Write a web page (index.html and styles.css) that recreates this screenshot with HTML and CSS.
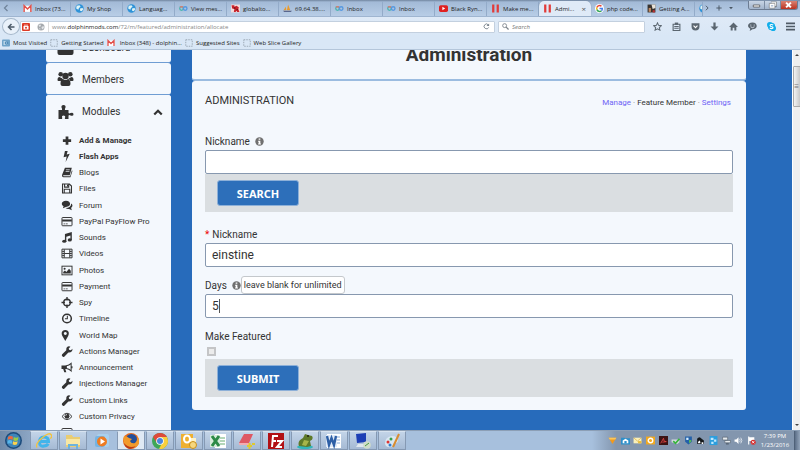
FILE: index.html
```
<!DOCTYPE html>
<html lang="en">
<head>
    <meta charset="utf-8">
    <title>Administration</title>
    <link rel="stylesheet" href="styles.css">
</head>
<body>
    <!-- icon sprite -->
    <svg class="sprite" aria-hidden="true">
        <symbol id="gmail" viewBox="0 0 16 16"><path fill="#fff" d="M1 3h14v11H1z"/><path fill="none" stroke="#e2504a" stroke-width="2.6" d="M2 14V3l6 6 6-6v11"/></symbol>
        <symbol id="globe" viewBox="0 0 16 16"><circle cx="8" cy="8" r="7.5" fill="#2f93d8"/><path fill="#dff3f5" d="M3 3l5-1 2 3-3 2-1 3-4-2zM9 8l4-1 2 2-3 4-3-1z"/></symbol>
        <symbol id="loop" viewBox="0 0 16 16"><g fill="none" stroke-width="2.4"><circle cx="4.5" cy="8" r="3.2" stroke="#4bb5b0"/><circle cx="11" cy="8" r="3.2" stroke="#5598e0"/><path stroke="#e2776c" d="M2 6a3.200 3.200 0 0 1 5 0"/></g></symbol>
        <symbol id="redsite" viewBox="0 0 16 16"><path fill="#f4dcdc" d="M0 1h16v14H0z"/><path fill="#c9222b" d="M1 2h5v3l4-2 4 3-1 3 2 5h-4l-1-2-2 2H5l1-5-4-1z"/><path fill="#511" d="M5 6h3v2H5zM10 9h2v2h-2z"/></symbol>
        <symbol id="sail" viewBox="0 0 16 16"><path fill="#e99a2c" d="M1 11l4-6 1 6zM7 11l2-10 4 10z"/><path fill="#59678e" d="M0 12h16l-2 2H2z"/></symbol>
        <symbol id="youtube" viewBox="0 0 16 16"><rect y="2" width="16" height="12" rx="3" fill="#e02020"/><path fill="#fff" d="M6 5l5 3-5 3z"/></symbol>
        <symbol id="bars" viewBox="0 0 16 16"><path fill="#e23b39" d="M2 1h4v14H2zM10 1h4v14h-4z"/></symbol>
        <symbol id="google" viewBox="0 0 16 16"><circle cx="8" cy="8" r="8" fill="#fff"/><g fill="none" stroke-width="2.6"><path stroke="#e74435" d="M3.500 6a5 5 0 0 1 8-2"/><path stroke="#f5b912" d="M3.500 10a5 5 0 0 1 0-4"/><path stroke="#35a455" d="M3.500 10a5 5 0 0 0 8 2"/><path stroke="#4580ec" d="M8 8h5q0 3-1.500 4"/></g></symbol>
        <symbol id="photo" viewBox="0 0 16 16"><path fill="#39332f" d="M1 1h14v14H1z"/><path fill="#e8e2d8" d="M8 1h7v6l-5 2z"/><path fill="#c18a62" d="M3 7h4v7H3z"/><path fill="#b33" d="M10 11h4v4h-4z"/></symbol>
        <symbol id="back" viewBox="0 0 16 16"><path fill="none" stroke="#4c5a68" stroke-width="3" d="M15 8H3M9 2L3 8l6 6"/></symbol>
        <symbol id="block" viewBox="0 0 16 16"><rect width="16" height="16" rx="2" fill="#dd3a26"/><path fill="#fff" d="M3 6h10v7H3zM5 3h2v3H5zM9 3h2v3H9z"/><circle cx="8" cy="9.500" r="2" fill="#dd3a26"/></symbol>
        <symbol id="world" viewBox="0 0 16 16"><circle cx="8" cy="8" r="7" fill="#a5a9ad"/><path fill="#e2e5e8" d="M3 4l4-1 1 3-3 2zM9 8l4-2 1 4-4 3zM4 10l3 1-1 3z"/></symbol>
        <symbol id="reload" viewBox="0 0 16 16"><path fill="none" stroke="#76808a" stroke-width="2" d="M13 10a5.500 5.500 0 1 1-1-6"/><path fill="#76808a" d="M14 1v6H8z"/></symbol>
        <symbol id="lens" viewBox="0 0 16 16"><g fill="none" stroke="#7b838b" stroke-width="2"><circle cx="6" cy="6" r="4.500"/><path stroke-width="3" d="M9.500 9.500L15 15"/></g></symbol>
        <symbol id="star" viewBox="0 0 16 16"><path fill="none" stroke="#5b6670" stroke-width="1.800" d="M8 1.500l2 4.500 5 .5-3.700 3.300 1 4.700L8 12l-4.300 2.500 1-4.700L1 6.500 6 6z"/></symbol>
        <symbol id="clip" viewBox="0 0 16 16"><path fill="none" stroke="#5b6670" stroke-width="2" d="M2 4h12v11H2zM4 8h8M4 11h8"/><path fill="#5b6670" d="M5 1h6v4H5z"/></symbol>
        <symbol id="pocket" viewBox="0 0 16 16"><path fill="#5b6670" d="M1 2h14v6a7 7 0 0 1-14 0z"/><path fill="none" stroke="#fff" stroke-width="2" d="M4.500 6.500L8 10l3.500-3.500"/></symbol>
        <symbol id="down" viewBox="0 0 16 16"><path fill="#5b6670" d="M6 1h4v7h5l-7 7-7-7h5z"/></symbol>
        <symbol id="home" viewBox="0 0 16 16"><path fill="#5b6670" d="M8 1l8 8h-3v6H9.500v-5h-3v5H3V9H0z"/></symbol>
        <symbol id="smile" viewBox="0 0 16 16"><path fill="#5b6670" d="M8 1c10 0 10 12 0 12l-5 3 1-4C-3 8 0 1 8 1z"/><path fill="none" stroke="#dfe9f5" stroke-width="1.500" d="M4.500 8.500q3.500 3 7 0M5 4.500v2M11 4.500v2"/></symbol>
        <symbol id="skype" viewBox="0 0 16 16"><circle cx="5" cy="5" r="5" fill="#12aeea"/><circle cx="11" cy="11" r="5" fill="#12aeea"/><circle cx="8" cy="8" r="6.500" fill="#12aeea"/><path fill="none" stroke="#fff" stroke-width="1.800" d="M11 5.500C9 3.500 5 4 5.500 6.500S11 8 10.800 10 7 12.500 5 10.500"/></symbol>
        <symbol id="menu" viewBox="0 0 16 16"><path fill="#505b66" d="M0 1h16v3H0zM0 6.500h16v3H0zM0 12h16v3H0z"/></symbol>
        <symbol id="dashed" viewBox="0 0 16 16"><rect x="1.500" y="1.500" width="13" height="13" fill="none" stroke="#8b97a3" stroke-width="1.500" stroke-dasharray="3 2"/></symbol>
        <symbol id="visited" viewBox="0 0 16 16"><rect y="1" width="16" height="14" rx="2" fill="#6ea3c9"/><path fill="#bcd7e9" d="M3 4h6l2 2v6H3z"/><circle cx="9" cy="8" r="3.500" fill="#4b86b5"/><circle cx="9" cy="8" r="1.500" fill="#a9cce4"/></symbol>

        <symbol id="tach" viewBox="0 0 16 16"><path fill="#333" d="M0 6h3v4h10V6h3v7q0 2-2 2H2q-2 0-2-2z"/></symbol>
        <symbol id="users" viewBox="0 0 16 16"><g fill="#333"><circle cx="3.200" cy="3.300" r="2.300"/><circle cx="12.800" cy="3.300" r="2.300"/><circle cx="8" cy="5" r="3.200"/><path d="M0 9q0-3 2-3l3 1.500L4.500 9 3 10H1q-1 0-1-1zM16 9q0-3-2-3l-3 1.500.5 1.500 1.500 1h2q1 0 1-1zM3 13q0-5 2.500-5Q8 10 10.500 8 13 8 13 13q0 2-2 2H5q-2 0-2-2z"/></g></symbol>
        <symbol id="puzzle" viewBox="0 0 16 16"><path fill="#333" d="M1 6h3.500Q5 5 4 3.500 3.500 1 6 1t2 2.500Q7 5 7.500 6H11v3q1 .8 2 0 3-1 3 1.200t-3 1.300q-1-.8-2 0V15H7.500q-.5-1 .3-2 .2-1.500-1.800-1.500T4.500 13q.5 1 0 2H1z"/></symbol>
        <symbol id="chevron" viewBox="0 0 16 16"><path fill="none" stroke="#333" stroke-width="3.500" d="M2 12l6-6 6 6"/></symbol>
        <symbol id="plus" viewBox="0 0 16 16"><path fill="#333" d="M6 2h4v4h4v4h-4v4H6v-4H2V6h4z"/></symbol>
        <symbol id="bolt" viewBox="0 0 16 16"><path fill="#333" d="M5 0h4L7.500 5l4.500-1L6 16l1.500-8L3 9z"/></symbol>
        <symbol id="book" viewBox="0 0 16 16"><path fill="#333" d="M5 1h10l-3 11H3q-1.500 1 0 1.500h9.500L15 5l1 .5L13 15H3q-3-.5-2-4z"/><path stroke="#f4f8fd" d="M6.500 4h5.500M6 6.500h5.500"/></symbol>
        <symbol id="save" viewBox="0 0 16 16"><path fill="none" stroke="#333" stroke-width="1.600" d="M1.500 1.500h10l3 3v10h-13zM4 14v-5h8v5M4.500 2v4h6V2"/><path fill="#333" d="M8 2h2v3H8z"/></symbol>
        <symbol id="comments" viewBox="0 0 16 16"><path fill="#333" d="M6.500 1c8 0 8 9 0 9L2 12l1-3C-2 6 1 1 6.500 1z"/><path fill="#333" d="M14 5c3 2 2 5 0 6.500L15 15l-4-2q-3 .5-5-1.500 8 0 8-6.500z"/></symbol>
        <symbol id="card" viewBox="0 0 16 16"><rect x=".7" y="2.200" width="14.600" height="12" rx="1" fill="none" stroke="#333" stroke-width="1.400"/><path fill="#333" d="M1 5h14v3H1zM3 11h2v1H3zM6 11h3v1H6z"/></symbol>
        <symbol id="music" viewBox="0 0 16 16"><path fill="#333" d="M5 3l10-3v11.500H13V5L7 7v7H5z"/><ellipse cx="4" cy="13.500" rx="3" ry="2.300" fill="#333"/><ellipse cx="12" cy="11.500" rx="3" ry="2.300" fill="#333"/></symbol>
        <symbol id="film" viewBox="0 0 16 16"><path fill="none" stroke="#333" stroke-width="1.400" d="M.7 1.700h14.600v12.600H.7zM4 2v12M12 2v12M4 8h8M1 5h3M1 8h3M1 11h3M12 5h3M12 8h3M12 11h3"/></symbol>
        <symbol id="image" viewBox="0 0 16 16"><rect x=".7" y="1.700" width="14.600" height="12.600" fill="none" stroke="#333" stroke-width="1.400"/><circle cx="4.500" cy="5.500" r="1.500" fill="#333"/><path fill="#333" d="M2.500 12.500V10L5 8l2 2 4-4.500 2.500 3v4z"/></symbol>
        <symbol id="cross" viewBox="0 0 16 16"><circle cx="8" cy="8" r="4.800" fill="none" stroke="#333" stroke-width="2"/><path fill="#333" d="M7 0h2v5H7zM7 11h2v5H7zM0 7h5v2H0zM11 7h5v2h-5z"/></symbol>
        <symbol id="clock" viewBox="0 0 16 16"><g fill="none" stroke="#333"><circle cx="8" cy="8" r="6.300" stroke-width="2.200"/><path stroke-width="1.500" d="M8.500 4v4.500H5"/></g></symbol>
        <symbol id="pin" viewBox="0 0 16 16"><path fill="#333" fill-rule="evenodd" d="M5.500 0c6 0 6 6 4 9l-4 7-4-7c-2-3-2-9 4-9zm0 3a2.200 2.200 0 1 0 .1 0z"/></symbol>
        <symbol id="wrench" viewBox="0 0 16 16"><path fill="#333" d="M1 12l6-6Q6.500 1 11 .5l2 .5-2.500 2.500.5 2 2.500.5L16 4q0 6-6 5.500L4 15.500q-1.500 1-2.800-.5T1 12z"/></symbol>
        <symbol id="horn" viewBox="0 0 16 16"><path fill="#333" d="M0 5h7v5H5.500L7 15H4L2.500 10H0z"/><path fill="none" stroke="#333" stroke-width="1.500" d="M7 5.500q4-.5 7-3.500v11q-3-3-7-3.500z"/><path fill="#333" d="M14 6h2v3h-2z"/></symbol>
        <symbol id="eye" viewBox="0 0 16 16"><path fill="none" stroke="#333" stroke-width="1.400" d="M.7 8q7.300-9.500 14.600 0Q8 17 .7 8z"/><circle cx="8" cy="7.500" r="3.600" fill="#333"/><path fill="none" stroke="#f4f8fd" d="M6 7q0-2 2-2"/></symbol>
        <symbol id="info" viewBox="0 0 16 16"><circle cx="8" cy="8" r="7.500" fill="#707070"/><path fill="#fff" d="M6.500 2.500h3v2.500h-3zM5.500 6.500h4v5h1v1.800h-5v-1.800h1v-3.200h-1z"/></symbol>

        <symbol id="start" viewBox="0 0 16 16"><circle cx="8" cy="8" r="8" fill="#1d4c7d"/><circle cx="8" cy="8" r="6.500" fill="#3f85b8"/><path fill="#f0683a" d="M3 4.500q2.500-1.500 4.500 0L7 7.500q-2-1.500-4.300-.2z"/><path fill="#9acb43" d="M8.300 4.800q2 1.200 4.400 0l-.6 3q-2.200 1.200-4.300 0z"/><path fill="#55b6ec" d="M2.600 8.200q2-1.300 4.200 0l-.5 3q-2-1.300-4-.2z"/><path fill="#fbd24b" d="M7.600 8.600q2 1.200 4.300 0l-.6 3q-2 1.200-4.200 0z"/></symbol>
        <symbol id="ie" viewBox="0 0 16 16"><path fill="none" stroke="#42b4ea" stroke-width="3" d="M3.500 8.500h9Q12.500 4 8 4T3.500 9 8 13q3 0 4.200-2.200"/><path fill="none" stroke="#f3c33c" stroke-width="1.300" d="M1 14.500Q-1 11 6 5t9-3.500-1 4"/></symbol>
        <symbol id="folder" viewBox="0 0 16 16"><path fill="#e9cd73" d="M1 2h6l1 2h7v10H1z"/><path fill="#f8e7a4" d="M1 6h14v6H1z"/><path fill="#6db3dc" d="M3 11h10v5h-2v-3H5v3H3z"/></symbol>
        <symbol id="player" viewBox="0 0 16 16"><rect x="3" y="1" width="12" height="13" rx="2" fill="#a8d0ee"/><rect x="1" y="3" width="10" height="11" rx="2" fill="#75b4e3"/><circle cx="8" cy="8.500" r="5" fill="#ee7b22"/><path fill="#fff" d="M6.500 5.500l4.500 3-4.500 3z"/></symbol>
        <symbol id="firefox" viewBox="0 0 16 16"><circle cx="8" cy="8" r="8" fill="#e66a1c"/><circle cx="8.500" cy="6.500" r="5.500" fill="#234f9b"/><path fill="#f29a2b" d="M1 3q3 0 5 2l3 1-2 2q1 3 5 2 3-2 2-7 5 7-1 11-9 4-12-4-1-4 0-7z"/><path fill="#bb3a17" d="M1 10q5 6 12 3-3 3-6 3-5-1-6-6z"/></symbol>
        <symbol id="chrome" viewBox="0 0 16 16"><circle cx="8" cy="8" r="8" fill="#3fa757"/><path fill="#de4a3c" d="M1 4q2.500-4 7-4t7 4H8L5 10z"/><path fill="#f9cf3e" d="M15 4q3 7-3 11-2 1.500-5 1l4-8-3-4z"/><circle cx="8" cy="8" r="3.800" fill="#fff"/><circle cx="8" cy="8" r="3" fill="#4a86de"/></symbol>
        <symbol id="outlook" viewBox="0 0 16 16"><path fill="#eeb030" d="M0 1h12v14H0z"/><path fill="#fff3c6" d="M8 5h7v4H8z"/><ellipse cx="6" cy="6" rx="3" ry="3.500" fill="none" stroke="#fff" stroke-width="2"/><circle cx="12" cy="12" r="3.500" fill="#f6d77f" stroke="#c88f19"/></symbol>
        <symbol id="excel" viewBox="0 0 16 16"><path fill="#fff" d="M5 1h11v14H5z"/><path stroke="#68ad72" d="M10 5h5M10 8h5M10 11h5"/><path fill="#d8ecdc" d="M0 2h10v12H0z"/><path stroke="#2d8a47" stroke-width="3" d="M2 3l7 10M9 3L2 13"/></symbol>
        <symbol id="card3" viewBox="0 0 16 16"><path fill="#de5863" d="M5 1h9l-4 9H0z"/><path fill="#f4aab0" d="M0 10h10v2H0z"/><path fill="none" stroke="#dfc92e" stroke-width="2" d="M8 13h5M10.500 10v6M13 11h3"/></symbol>
        <symbol id="filezilla" viewBox="0 0 16 16"><path fill="#b11116" d="M0 0h16v16H0z"/><path fill="none" stroke="#fff" stroke-width="2" d="M4 14l1-11h5M4 8h4M9 8h5l-5 6h5"/></symbol>
        <symbol id="frog" viewBox="0 0 16 16"><ellipse cx="8" cy="14" rx="8" ry="2" fill="#31b6bb"/><path fill="#5e7a2a" d="M2 13Q0 8 6 5l2-4 3 1 4 1q2 3-2 5l1 5-4 1z"/><path fill="#a6b54a" d="M7 7l5 1-3 5-4-1z"/><circle cx="11" cy="3" r="1" fill="#221"/></symbol>
        <symbol id="word" viewBox="0 0 16 16"><path fill="#fff" d="M1 1h14v14H1z"/><path stroke="#86a9d8" d="M11 4h3M11 7h3M11 10h3"/><path fill="#e1ebf8" d="M0 2h11v12H0z"/><path fill="none" stroke="#2d5fa6" stroke-width="2.400" d="M1 3l2 9 2.500-7L8 12l2-9"/></symbol>
        <symbol id="remote" viewBox="0 0 16 16"><path fill="#1d3fb5" d="M1 1l10-1v9l-9 1z"/><path fill="#dfe7ef" d="M3 11h7l1 3H1z"/><circle cx="12" cy="12" r="3.800" fill="#cfdcc9"/><path stroke="#4a9a3f" d="M10 13l4-3"/></symbol>
        <symbol id="paint" viewBox="0 0 16 16"><path fill="#d9e7f2" d="M1 10Q1 4 8 3q6 0 6 5-1 3-4 2-1 5-6 4-3-1-3-4z"/><circle cx="4" cy="9" r="1.500" fill="#d33"/><circle cx="7" cy="6" r="1.500" fill="#3a9f4b"/><circle cx="6" cy="12" r="1.500" fill="#2f7cd1"/><path stroke="#d98c30" stroke-width="2" d="M15 1L9 14"/></symbol>

        <symbol id="t-down" viewBox="0 0 16 16"><path fill="#f39a1b" d="M1 3h14L8 14z"/><path fill="#fbc65a" d="M1 3h14l-2 3H3z"/></symbol>
        <symbol id="t-box" viewBox="0 0 16 16"><path fill="#2d8fc9" d="M0 3h6l1 1h9v11H0z"/><path fill="#fff" d="M3 8l5-3 5 3v5H3z"/><path fill="#2d8fc9" d="M6 9h4v4H6z"/></symbol>
        <symbol id="t-mail" viewBox="0 0 16 16"><path fill="#fbf0b9" d="M1 3h14v10H1z"/><path fill="none" stroke="#d0a12b" d="M1 3l7 6 7-6"/><path fill="#e9bd3e" d="M9 9h6v4H9z"/></symbol>
        <symbol id="t-out" viewBox="0 0 16 16"><path fill="#f0a91f" d="M0 1h16v14H0z"/><circle cx="8" cy="8" r="4" fill="none" stroke="#fff" stroke-width="2.500"/></symbol>
        <symbol id="t-pdf" viewBox="0 0 16 16"><path fill="#3c1414" d="M0 0h16v16H0z"/><path fill="none" stroke="#e24545" stroke-width="1.500" d="M3 13l5-9 1 5 4 1-7 1"/></symbol>
        <symbol id="t-disk" viewBox="0 0 16 16"><path fill="#d6dbdf" d="M1 6h14v5l-4 3-10-3z"/><path fill="none" stroke="#37b43d" stroke-width="3" d="M4 9l4 4 7-8"/></symbol>
        <symbol id="t-net" viewBox="0 0 16 16"><path fill="#2461a9" d="M2 1h12v9l-6 5-6-5z"/><path fill="#d9efff" d="M4 3h4v4H4z"/><path fill="#58b85a" d="M9 7h4v3l-4 3z"/></symbol>
        <symbol id="t-dark" viewBox="0 0 16 16"><path fill="#16191c" d="M2 14V5q4-6 8 0l4 3v6z"/><path fill="#fff" d="M3 13q1-5 4-5l1 5zM10 11h3v3h-3z"/></symbol>
        <symbol id="t-win" viewBox="0 0 16 16"><path fill="#2c9ede" d="M1 0h14v16H1z"/><path fill="#bfe9ff" d="M3 3h5v4H3zM9 6h4v4H9zM4 10h4v4H4z"/></symbol>
        <symbol id="t-usb" viewBox="0 0 16 16"><path fill="#e5eaee" stroke="#4c5966" d="M1 2h9v5H1zM5 8h10v4H5z"/><path fill="#4c5966" d="M7 13h5v2H7z"/></symbol>
        <symbol id="t-sound" viewBox="0 0 16 16"><path fill="#fff" d="M1 6h3l4-4v12l-4-4H1z"/><path fill="none" stroke="#e4eaf0" stroke-width="1.500" d="M10 5q2 3 0 6M12 3q4 5 0 10"/></symbol>
        <symbol id="t-flag" viewBox="0 0 16 16"><path fill="#fff" d="M2 1h2v14H2zM4 2h9v7H4z"/><circle cx="11" cy="11" r="4.500" fill="#d62c2c"/><path stroke="#fff" stroke-width="1.500" d="M9 9l4 4M13 9l-4 4"/></symbol>
    </svg>

    <!-- tabs -->
    <div class="tab-bar">
        <svg class="tab-scroll" viewBox="0 0 16 16"><path fill="none" stroke="#71849b" stroke-width="2.500" d="M11 2L5 8l6 6"/></svg>
        <div class="tabs">
            <div class="tab"><svg><use href="#gmail"/></svg>Inbox (73...</div>
            <div class="tab"><svg><use href="#globe"/></svg>My Shop</div>
            <div class="tab"><svg><use href="#globe"/></svg>Languag...</div>
            <div class="tab"><svg><use href="#loop"/></svg>View mes...</div>
            <div class="tab"><svg><use href="#redsite"/></svg>globalto...</div>
            <div class="tab"><svg><use href="#sail"/></svg>69.64.38....</div>
            <div class="tab"><svg><use href="#loop"/></svg>Inbox</div>
            <div class="tab"><svg><use href="#loop"/></svg>Inbox</div>
            <div class="tab"><svg><use href="#youtube"/></svg>Black Ryn...</div>
            <div class="tab"><svg><use href="#bars"/></svg>Make me...</div>
            <div class="tab active"><svg><use href="#bars"/></svg>Admi...<span class="tab-close">×</span></div>
            <div class="tab"><svg><use href="#google"/></svg>php code...</div>
            <div class="tab"><svg><use href="#photo"/></svg>Getting A...</div>
            <div class="tab cut"><svg><use href="#globe"/></svg></div>
        </div>
        <div class="tab-tools">
            <svg viewBox="0 0 16 16"><path fill="none" stroke="#4a5663" stroke-width="2.500" d="M5 2l6 6-6 6"/></svg>
            <svg viewBox="0 0 16 16"><path stroke="#4a5663" stroke-width="2.500" d="M8 1v14M1 8h14"/></svg>
            <svg viewBox="0 0 16 16"><path fill="#4a5663" d="M3 5h10l-5 6z"/></svg>
        </div>
        <div class="window-buttons">
            <button class="win-btn" aria-label="Minimize"><svg viewBox="0 0 16 10"><path fill="#fff" stroke="#555" d="M4 5h8v2.500H4z"/></svg></button>
            <button class="win-btn" aria-label="Restore"><svg viewBox="0 0 16 10"><path fill="none" stroke="#fff" stroke-width="2" d="M5 4h5v4H5zM7 2h5v4"/><path fill="none" stroke="#555" stroke-width=".6" d="M4 3h7v6H4zM6 1h7v6h-2"/></svg></button>
            <button class="win-btn close" aria-label="Close"><svg viewBox="0 0 16 10"><path stroke="#fff" stroke-width="2.500" d="M5 2l6 6M11 2L5 8"/></svg></button>
        </div>
    </div>

    <!-- address bar -->
    <div class="nav-bar">
        <button class="back-btn" aria-label="Back"><svg><use href="#back"/></svg></button>
        <div class="url-box">
            <svg><use href="#block"/></svg>
            <svg class="site"><use href="#world"/></svg>
            <div class="url" role="textbox" aria-label="Address">www.<b>dolphinmods.com</b>/72/m/featured/administration/allocate</div>
            <svg class="reload"><use href="#reload"/></svg>
        </div>
        <label class="search-box"><svg><use href="#lens"/></svg><input type="text" placeholder="Search" aria-label="Search"></label>
        <div class="nav-icons">
            <svg><use href="#star"/></svg>
            <svg><use href="#clip"/></svg>
            <svg><use href="#pocket"/></svg>
            <svg><use href="#down"/></svg>
            <svg><use href="#home"/></svg>
            <svg><use href="#smile"/></svg>
            <svg><use href="#skype"/></svg>
            <svg><use href="#menu"/></svg>
        </div>
    </div>

    <!-- bookmarks -->
    <div class="bookmarks">
        <a href="#"><svg><use href="#visited"/></svg>Most Visited</a>
        <a href="#"><svg><use href="#dashed"/></svg>Getting Started</a>
        <a class="mail" href="#"><svg><use href="#gmail"/></svg>Inbox (348) - dolphin...</a>
        <a href="#"><svg><use href="#dashed"/></svg>Suggested Sites</a>
        <a href="#"><svg><use href="#dashed"/></svg>Web Slice Gallery</a>
    </div>

    <!-- page -->
    <div class="viewport">
        <div class="page">
            <aside class="sidebar">
                <a class="menu-item first" href="#"><svg><use href="#tach"/></svg>Dashboard</a>
                <a class="menu-item" href="#"><svg><use href="#users"/></svg>Members</a>
                <div class="menu-group">
                    <a class="menu-item" href="#"><svg><use href="#puzzle"/></svg>Modules<svg class="toggle"><use href="#chevron"/></svg></a>
                    <ul class="submenu">
                        <li><a class="strong" href="#"><svg><use href="#plus"/></svg>Add &amp; Manage</a></li>
                        <li><a class="strong" href="#"><svg><use href="#bolt"/></svg>Flash Apps</a></li>
                        <li><a href="#"><svg><use href="#book"/></svg>Blogs</a></li>
                        <li><a href="#"><svg><use href="#save"/></svg>Files</a></li>
                        <li><a href="#"><svg><use href="#comments"/></svg>Forum</a></li>
                        <li><a href="#"><svg><use href="#card"/></svg>PayPal PayFlow Pro</a></li>
                        <li><a href="#"><svg><use href="#music"/></svg>Sounds</a></li>
                        <li><a href="#"><svg><use href="#film"/></svg>Videos</a></li>
                        <li><a href="#"><svg><use href="#image"/></svg>Photos</a></li>
                        <li><a href="#"><svg><use href="#card"/></svg>Payment</a></li>
                        <li><a href="#"><svg><use href="#cross"/></svg>Spy</a></li>
                        <li><a href="#"><svg><use href="#clock"/></svg>Timeline</a></li>
                        <li><a href="#"><svg><use href="#pin"/></svg>World Map</a></li>
                        <li><a href="#"><svg><use href="#wrench"/></svg>Actions Manager</a></li>
                        <li><a href="#"><svg><use href="#horn"/></svg>Announcement</a></li>
                        <li><a href="#"><svg><use href="#wrench"/></svg>Injections Manager</a></li>
                        <li><a href="#"><svg><use href="#wrench"/></svg>Custom Links</a></li>
                        <li><a href="#"><svg><use href="#eye"/></svg>Custom Privacy</a></li>
                        <li><a href="#" aria-label="More"><svg><use href="#card"/></svg></a></li>
                    </ul>
                </div>
            </aside>

            <main class="main">
                <div class="title-box"><h1>Administration</h1></div>
                <div class="panel">
                    <div class="panel-head">
                        <h2>ADMINISTRATION</h2>
                        <div class="panel-links">
                            <a href="#">Manage</a><i>·</i><span>Feature Member</span><i>·</i><a href="#">Settings</a>
                        </div>
                    </div>
                    <form class="search-form">
                        <div class="label-row"><label for="find-name">Nickname</label><svg><use href="#info"/></svg></div>
                        <input class="field" type="text" id="find-name">
                        <div class="actions"><button type="button" class="btn">SEARCH</button></div>
                    </form>
                    <form>
                        <div class="label-row"><span class="required">*</span><label for="nickname">Nickname</label></div>
                        <input class="field" type="text" id="nickname" value="einstine">
                        <div class="label-row spaced">
                            <label for="days">Days</label>
                            <svg><use href="#info"/></svg>
                            <span class="tooltip">leave blank for unlimited</span>
                        </div>
                        <div class="field-wrap"><input class="field" type="text" id="days" value="5"></div>
                        <div class="label-row spaced"><label for="featured">Make Featured</label></div>
                        <div class="check-row"><input type="checkbox" id="featured"></div>
                        <div class="actions"><button type="button" class="btn">SUBMIT</button></div>
                    </form>
                </div>
            </main>
        </div>
        <div class="scrollbar"><span class="arrow up"></span><div class="thumb">≡</div><span class="arrow"></span></div>
    </div>

    <!-- taskbar -->
    <div class="taskbar">
        <button class="start" aria-label="Start"><svg><use href="#start"/></svg></button>
        <div class="apps">
            <button class="app" aria-label="Internet Explorer"><svg><use href="#ie"/></svg></button>
            <button class="app" aria-label="Explorer"><svg><use href="#folder"/></svg></button>
            <button class="app idle" aria-label="Media Player"><svg><use href="#player"/></svg></button>
            <button class="app current" aria-label="Firefox"><svg><use href="#firefox"/></svg></button>
            <button class="app" aria-label="Chrome"><svg><use href="#chrome"/></svg></button>
            <button class="app" aria-label="Outlook"><svg><use href="#outlook"/></svg></button>
            <button class="app" aria-label="Excel"><svg><use href="#excel"/></svg></button>
            <button class="app" aria-label="Cards"><svg><use href="#card3"/></svg></button>
            <button class="app" aria-label="FileZilla"><svg><use href="#filezilla"/></svg></button>
            <button class="app" aria-label="Frog"><svg><use href="#frog"/></svg></button>
            <button class="app" aria-label="Word"><svg><use href="#word"/></svg></button>
            <button class="app" aria-label="Remote Desktop"><svg><use href="#remote"/></svg></button>
            <button class="app" aria-label="Paint"><svg><use href="#paint"/></svg></button>
        </div>
        <div class="tray">
            <svg><use href="#t-down"/></svg>
            <svg><use href="#t-box"/></svg>
            <svg><use href="#t-mail"/></svg>
            <svg><use href="#t-out"/></svg>
            <svg><use href="#t-pdf"/></svg>
            <svg><use href="#t-disk"/></svg>
            <svg><use href="#t-net"/></svg>
            <svg><use href="#t-dark"/></svg>
            <svg><use href="#t-win"/></svg>
            <svg><use href="#t-usb"/></svg>
            <svg><use href="#t-sound"/></svg>
            <svg><use href="#t-flag"/></svg>
        </div>
        <div class="clock"><span>7:39 PM</span><span>1/23/2016</span></div>
        <div class="show-desktop"></div>
    </div>
</body>
</html>
```
FILE: styles.css
```
* {
    box-sizing: border-box;
}

body {
    margin: 0;
    height: 100vh;
    display: flex;
    flex-direction: column;
    overflow: hidden;
    background: #276bbb;
    color: #333;
    font-family: Roboto, Arial, sans-serif;
}

svg {
    flex: none;
    display: block;
}

a {
    color: inherit;
    text-decoration: none;
}

button {
    padding: 0;
    border: none;
    background: none;
    font: inherit;
}

.sprite {
    display: none;
}

/* browser chrome */
.tab-bar,
.nav-bar,
.bookmarks,
.taskbar {
    flex: none;
    display: flex;
    font-family: "Open Sans", "Noto Sans", sans-serif;
    font-size: 6px;
    line-height: 10px;
    white-space: nowrap;
}

.tab-bar {
    height: 17px;
    background: linear-gradient(#71859f, #a3bad7 2px, #b8cde6);
    border-bottom: 1px solid #9fb5d0;
    color: #222;
}

.tab-scroll {
    width: 8px;
    height: 8px;
    margin: 4px 9px 0 2px;
}

.tabs {
    display: flex;
    padding-top: 1px;
}

.tab {
    flex: none;
    width: 52px;
    display: flex;
    align-items: center;
    gap: 3px;
    padding-left: 4px;
    border-right: 1px solid #93abc9;
    overflow: hidden;
}

.tab svg {
    width: 9px;
    height: 9px;
}

.tab.active {
    background: #dfeaf7;
    border: none;
    border-radius: 5px 5px 0 0;
    box-shadow: 0 0 1px #64788f;
}

.tab.cut {
    width: 8px;
}

.tab-close {
    margin-left: auto;
    padding-right: 5px;
    font-size: 8px;
    color: #555;
}

.tab-tools {
    display: flex;
    align-items: center;
    gap: 6px;
    padding-left: 1px;
}

.tab-tools svg {
    width: 6px;
    height: 6px;
}

.window-buttons {
    display: flex;
    height: 9px;
    margin: 1px 2px 0 auto;
    border: 1px solid #6c7c92;
    border-top: none;
    border-radius: 0 0 3px 3px;
    overflow: hidden;
}

.win-btn {
    width: 16px;
    background: linear-gradient(#c8d5e5, #a2b4cc);
    border-right: 1px solid #7c8ca2;
}

.win-btn svg {
    width: 15px;
    height: 8px;
}

.win-btn.close {
    background: linear-gradient(#d98272, #bb3320);
    border: none;
}

.nav-bar {
    height: 19px;
    align-items: center;
    padding: 0 5px 0 2px;
    background: linear-gradient(#dfeaf7, #d9e7f6);
}

.back-btn {
    width: 18px;
    height: 17px;
    display: grid;
    place-items: center;
    background: #e9f1fa;
    border: 1px solid #a6b8cb;
    border-radius: 50%;
}

.back-btn svg {
    width: 8px;
    height: 8px;
}

.url-box,
.search-box {
    display: flex;
    align-items: center;
    height: 12px;
    background: #fff;
    border: 1px solid #c3d0df;
    border-radius: 1px;
}

.url-box {
    flex: 1;
    padding: 0 4px 0 1px;
    color: #888;
}

.url-box svg {
    width: 8px;
    height: 8px;
}

.url-box .site {
    margin: 0 3px 0 7px;
}

.url {
    flex: 1;
    padding-left: 3px;
    border-left: 1px solid #ddd;
}

.url b {
    font-weight: normal;
    color: #222;
}

.url-box .reload {
    width: 7px;
    height: 7px;
}

.search-box {
    width: 147px;
    margin-left: 3px;
    padding-left: 3px;
    gap: 3px;
}

.search-box svg {
    width: 7px;
    height: 7px;
}

.search-box input {
    flex: 1;
    min-width: 0;
    padding: 0;
    border: none;
    background: none;
    font: italic 6px "Open Sans", sans-serif;
    outline: none;
}

.nav-icons {
    display: flex;
    gap: 10px;
    padding-left: 8px;
}

.nav-icons svg {
    width: 9px;
    height: 9px;
}

.bookmarks {
    height: 14px;
    align-items: center;
    gap: 3px;
    padding: 0 2px;
    background: #d9e7f6;
    border-bottom: 1px solid #b4c6da;
    color: #222;
}

.bookmarks a {
    display: flex;
    align-items: center;
    gap: 3px;
}

.bookmarks .mail {
    gap: 5px;
}

.bookmarks svg {
    width: 8px;
    height: 8px;
}

/* page */
.viewport {
    flex: 1;
    min-height: 0;
    display: flex;
    overflow: hidden;
}

.page {
    flex: 1;
    min-width: 0;
    display: flex;
    align-items: flex-start;
    gap: 21px;
    padding: 0 46px;
    /* page is scrolled a little way down */
    margin-top: -20px;
}

.sidebar {
    flex: none;
    width: 125px;
    display: flex;
    flex-direction: column;
}

.menu-item {
    height: 32px;
    display: flex;
    align-items: center;
    gap: 8px;
    padding: 1px 8px 0 11px;
    background: #f4f8fd;
    border-bottom: 1px solid #6f9dd3;
    border-radius: 3px;
    font-size: 10px;
}

.menu-item.first {
    height: 33px;
    padding-top: 3px;
}

.menu-item svg {
    width: 17px;
    height: 16px;
}

.menu-item .toggle {
    width: 10px;
    height: 10px;
    margin-left: auto;
}

.menu-group {
    background: #f4f8fd;
    border-radius: 3px;
}

.menu-group .menu-item {
    border-bottom: none;
}

.submenu {
    list-style: none;
    margin: 0;
    padding: 5px 0 0 15px;
    font-size: 8px;
}

.submenu li:nth-child(4n) {
    margin-bottom: 1px;
}

.submenu a {
    height: 16px;
    display: flex;
    align-items: center;
    gap: 6px;
}

.submenu svg {
    width: 12px;
    height: 11px;
}

.submenu .strong {
    font-weight: bold;
}

.main {
    flex: 1;
    min-width: 0;
}

.title-box {
    padding: 14px 12px;
    background: #f4f8fd;
    border-bottom: 2px solid #9bbce0;
    border-radius: 3px;
    text-align: center;
}

h1 {
    margin: 0;
    font-size: 19px;
    line-height: 21px;
}

.panel {
    padding: 0 13px 13px;
    background: #f4f8fd;
    border-radius: 3px;
}

.panel-head {
    display: flex;
    justify-content: space-between;
    align-items: center;
    height: 39px;
    margin-bottom: 14px;
}

h2 {
    margin: 0;
    font-size: 11px;
    font-weight: normal;
}

.panel-links {
    display: flex;
    gap: 2px;
    padding: 3px 2px 0 0;
    font-size: 8px;
}

.panel-links a {
    color: #6f63f5;
}

.panel-links i {
    font-style: normal;
    color: #888;
}

.search-form {
    margin-bottom: 15px;
}

.label-row {
    display: flex;
    align-items: center;
    height: 16px;
    padding-bottom: 2px;
    font-size: 10px;
}

.label-row.spaced {
    margin-top: 11px;
}

.label-row svg {
    width: 9px;
    height: 9px;
    margin-left: 5px;
}

.required {
    padding-right: 3px;
    color: #e00;
}

/* sits over the top edge of the field below */
.tooltip {
    position: relative;
    z-index: 1;
    padding: 0 2px;
    background: #fff;
    border: 1px solid #c4c8cc;
    border-radius: 3px;
    font-size: 9px;
    line-height: 16px;
}

.field {
    display: block;
    width: 100%;
    height: 24px;
    padding: 0 6px;
    background: #fff;
    border: 1px solid #8798af;
    border-radius: 2px;
    color: #333;
    font: 12px Roboto, Arial, sans-serif;
    outline: none;
}

.field-wrap {
    position: relative;
}

/* text cursor */
.field-wrap::after {
    content: "";
    position: absolute;
    left: 14px;
    top: 5px;
    width: 1px;
    height: 14px;
    background: #555;
}

.check-row {
    height: 14px;
    padding: 2px 2px;
}

.check-row input {
    appearance: none;
    display: block;
    width: 9px;
    height: 9px;
    margin: 0;
    background: #ececec;
    border: 2px solid #c4c5c7;
}

.actions {
    padding: 6px 12px;
    background: #dadee1;
}

.btn {
    display: block;
    width: 82px;
    height: 26px;
    background: #2d6fba;
    border: 1px solid #8db0d8;
    border-radius: 3px;
    color: #fff;
    font: bold 11px "Noto Sans", sans-serif;
}

.scrollbar {
    width: 8px;
    display: flex;
    flex-direction: column;
    align-items: center;
    background: #efefef;
    border-left: 1px solid #fff;
}

.thumb {
    width: 8px;
    height: 41px;
    margin: 10px 0 auto;
    background: linear-gradient(90deg, #f2f2f2, #c9c9c9);
    border: 1px solid #aaa;
    border-radius: 1px;
    color: #777;
    font-size: 8px;
    line-height: 39px;
    text-align: center;
}

.arrow {
    margin-bottom: 4px;
    border: 2px solid transparent;
    border-top: 2px solid #444;
    border-bottom: none;
}

.arrow.up {
    margin: 4px 0 0;
    border-top: none;
    border-bottom: 2px solid #444;
}

/* taskbar */
.taskbar {
    height: 20px;
    align-items: stretch;
    background: linear-gradient(90deg, #a7c0dd 74%, #8396ae 77%);
    border-top: 1px solid #8c9fb6;
}

.start {
    width: 30px;
    padding-left: 5px;
    background: linear-gradient(90deg, #6f89a8, #8ca6c4);
}

.start svg {
    width: 17px;
    height: 17px;
}

.apps {
    flex: 1;
    display: flex;
    gap: 1px;
}

.app {
    width: 28px;
    display: grid;
    place-items: center;
    background: linear-gradient(#c3d4e8, #a5bad4);
    border: 1px solid #8599b3;
    border-top-color: #d7e3f0;
}

.app.idle {
    background: none;
    border-color: transparent;
}

.app.current {
    background: #dfe9f4;
}

.app svg {
    width: 16px;
    height: 16px;
}

.tray {
    width: 148px;
    display: flex;
    align-items: center;
    justify-content: space-between;
}

.tray svg {
    width: 9px;
    height: 9px;
}

.clock {
    width: 38px;
    display: flex;
    flex-direction: column;
    justify-content: center;
    color: #fff;
    line-height: 9px;
    text-align: center;
}

.show-desktop {
    width: 6px;
    background: linear-gradient(90deg, #5c6f88, #93a5bb);
    border-left: 1px solid #4f6178;
}
```
